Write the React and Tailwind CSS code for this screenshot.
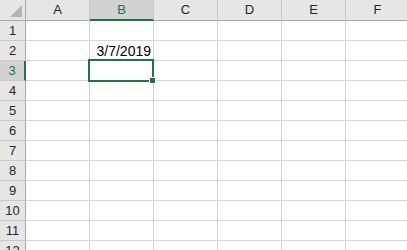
import React from "react";

const COLS = ["A", "B", "C", "D", "E", "F"];
const ROWS = [1, 2, 3, 4, 5, 6, 7, 8, 9, 10, 11, 12];

const font = { fontFamily: '"Liberation Sans", Arial, sans-serif' };

const ColHeader = ({ label, active }) => (
  <div
    className={
      "h-[21px] w-[64px] shrink-0 flex items-center justify-center text-[13px] border-r border-[#c8c8c8] " +
      (active
        ? "bg-[#d2d2d2] text-[#217346] border-b-2 border-b-[#217346]"
        : "bg-[#e6e6e6] text-[#262626] border-b border-b-[#ababab]")
    }
  >
    <span className={active ? "mt-[1px]" : ""}>{label}</span>
  </div>
);

const RowHeader = ({ n, active }) => (
  <div
    className={
      "h-[20px] w-[26px] shrink-0 flex items-center justify-center text-[13px] border-b border-[#c8c8c8] " +
      (active
        ? "bg-[#d2d2d2] text-[#217346] border-r-2 border-r-[#217346]"
        : "bg-[#e6e6e6] text-[#262626] border-r border-r-[#ababab]")
    }
  >
    {n}
  </div>
);

const Cell = ({ children, selected }) => (
  <div className="relative h-[20px] w-[64px] shrink-0 border-r border-b border-[#d4d4d4] bg-white flex items-end justify-end pr-[2px] pb-[2px] text-[14px] leading-none text-black">
    {children}
    {selected && (
      <div className="absolute z-10 -left-[2px] -top-[2px] w-[66px] h-[23px] border-2 border-[#217346]">
        <div className="absolute -right-[4px] -bottom-[4px] w-[7px] h-[7px] bg-[#217346] border border-white" />
      </div>
    )}
  </div>
);

export default function App() {
  return (
    <div className="w-[407px] h-[250px] overflow-hidden bg-white" style={font}>
      <div className="flex">
        <div className="relative h-[21px] w-[26px] shrink-0 bg-[#e6e6e6] border-r border-b border-[#ababab]">
          <svg className="absolute right-[3px] bottom-[3px]" width="12" height="12" viewBox="0 0 12 12">
            <polygon points="12,0 12,12 0,12" fill="#b4b4b4" />
          </svg>
        </div>
        {COLS.map((c) => (
          <ColHeader key={c} label={c} active={c === "B"} />
        ))}
      </div>
      {ROWS.map((r) => (
        <div key={r} className="flex">
          <RowHeader n={r} active={r === 3} />
          {COLS.map((c) => (
            <Cell key={c} selected={r === 3 && c === "B"}>
              {r === 2 && c === "B" ? "3/7/2019" : null}
            </Cell>
          ))}
        </div>
      ))}
    </div>
  );
}
